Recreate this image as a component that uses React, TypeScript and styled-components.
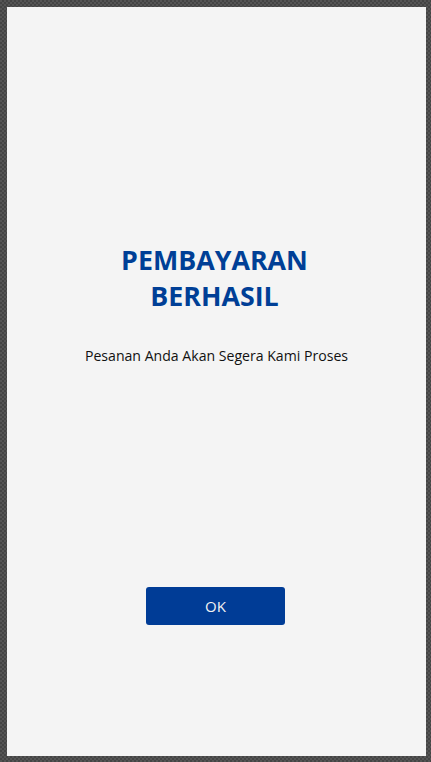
import React from "react";
import styled, { createGlobalStyle } from "styled-components";

const GlobalStyle = createGlobalStyle`
  html, body { margin: 0; padding: 0; }
  body { font-family: "Open Sans", "Noto Sans", sans-serif; }
`;

const Frame = styled.div`
  box-sizing: border-box;
  width: 431px;
  height: 762px;
  padding: 7px 5px 6px 7px;
  display: flex;
  background-color: #4b4b4b;
  background-image: repeating-conic-gradient(#444444 0% 25%, #555555 0% 50%);
  background-size: 4px 4px;
`;

const Panel = styled.main`
  flex: 1;
  background: #f4f4f4;
  display: flex;
  flex-direction: column;
  align-items: center;
  padding-top: 235px;
`;

const Title = styled.h1`
  margin: 0 4px 0 0;
  max-width: 240px;
  font-family: "Open Sans", "Noto Sans", sans-serif;
  font-weight: 700;
  font-size: 26.8px;
  line-height: 36px;
  color: #003f96;
  text-align: center;
`;

const Message = styled.p`
  margin: 32px 0 0;
  font-family: "Open Sans", "Noto Sans", sans-serif;
  font-size: 14.1px;
  line-height: 20px;
  color: #111111;
  text-align: center;
`;

const Button = styled.button`
  margin-top: 221px;
  margin-right: 2px;
  width: 139px;
  height: 38px;
  border: none;
  border-radius: 3px;
  background: #003c96;
  color: #f2f2f2;
  font-family: "Open Sans", "Noto Sans", sans-serif;
  font-size: 15px;
  cursor: pointer;
`;

export default function App() {
  return (
    <>
      <GlobalStyle />
      <Frame>
        <Panel>
          <Title>PEMBAYARAN BERHASIL</Title>
          <Message>Pesanan Anda Akan Segera Kami Proses</Message>
          <Button>OK</Button>
        </Panel>
      </Frame>
    </>
  );
}
